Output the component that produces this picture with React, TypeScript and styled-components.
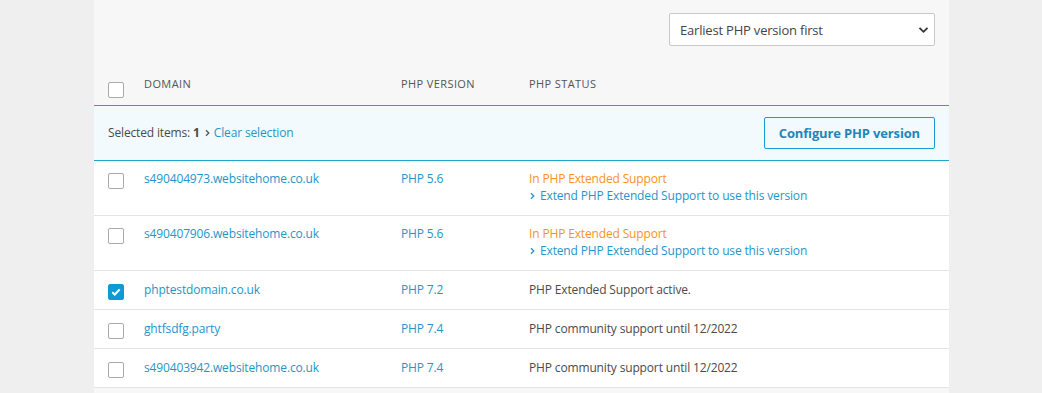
import React from 'react';
import styled, { createGlobalStyle } from 'styled-components';

const GlobalStyle = createGlobalStyle`
  body {
    margin: 0;
    background: #efefef;
    font-family: "Open Sans", "Liberation Sans", sans-serif;
    color: #4a4a4a;
  }
`;

type Row = {
  domain: string;
  version: string;
  status: string;
  extended?: boolean;
  checked?: boolean;
};

const rows: Row[] = [
  { domain: 's490404973.websitehome.co.uk', version: 'PHP 5.6', status: 'In PHP Extended Support', extended: true },
  { domain: 's490407906.websitehome.co.uk', version: 'PHP 5.6', status: 'In PHP Extended Support', extended: true },
  { domain: 'phptestdomain.co.uk', version: 'PHP 7.2', status: 'PHP Extended Support active.', checked: true },
  { domain: 'ghtfsdfg.party', version: 'PHP 7.4', status: 'PHP community support until 12/2022' },
  { domain: 's490403942.websitehome.co.uk', version: 'PHP 7.4', status: 'PHP community support until 12/2022' },
];

const Chevron = () => (
  <svg width="7" height="8" viewBox="0 0 7 8">
    <path d="M2 1.2 L4.8 4 L2 6.8" fill="none" stroke="currentColor" strokeWidth="1.3" />
  </svg>
);

const App = () => {
  return (
    <>
      <GlobalStyle />
      <Panel>
        <Toolbar>
          <Select>
            <span>Earliest PHP version first</span>
            <svg width="11" height="8" viewBox="0 0 11 8">
              <path d="M1.5 1.8 L5.5 5.8 L9.5 1.8" fill="none" stroke="#333" strokeWidth="1.8" />
            </svg>
          </Select>
        </Toolbar>
        <HeaderRow>
          <CheckCell>
            <Checkbox />
          </CheckCell>
          <HeadCell>Domain</HeadCell>
          <HeadCell>PHP Version</HeadCell>
          <HeadCell>PHP Status</HeadCell>
        </HeaderRow>
        <SelectionBar>
          <SelectionText>
            Selected items: <strong>1</strong>
            <Arrow>
              <Chevron />
            </Arrow>
            <Link>Clear selection</Link>
          </SelectionText>
          <OutlineButton>Configure PHP version</OutlineButton>
        </SelectionBar>
        {rows.map((r) => (
          <TableRow key={r.domain} $tall={!!r.extended}>
            <CheckCell>
              <Checkbox $checked={r.checked}>
                {r.checked && (
                  <svg width="10" height="8" viewBox="0 0 10 8">
                    <path d="M1.3 4.2 L3.8 6.5 L8.7 1.4" fill="none" stroke="#fff" strokeWidth="2" />
                  </svg>
                )}
              </Checkbox>
            </CheckCell>
            <Cell>
              <Link>{r.domain}</Link>
            </Cell>
            <Cell>
              <Link>{r.version}</Link>
            </Cell>
            <Cell>
              <Status $warn={r.extended}>{r.status}</Status>
              {r.extended && (
                <SubLink>
                  <Chevron />
                  Extend PHP Extended Support to use this version
                </SubLink>
              )}
            </Cell>
          </TableRow>
        ))}
      </Panel>
    </>
  );
};

export default App;

const Panel = styled.div`
  margin-left: 94px;
  width: 855px;
  min-height: 393px;
  background: #f7f7f7;
`;

const Toolbar = styled.div`
  display: flex;
  justify-content: flex-end;
  padding: 13px 14px 0 14px;
`;

const Select = styled.div`
  display: flex;
  align-items: center;
  justify-content: space-between;
  box-sizing: border-box;
  width: 266px;
  height: 33px;
  padding: 0 5px 0 10px;
  border: 1px solid #c9c9c9;
  border-radius: 2px;
  background: #fff;
  font-size: 13px;
  letter-spacing: -0.2px;
  color: #444;
`;

const grid = `
  display: grid;
  grid-template-columns: 36px 257px 128px 1fr;
  padding: 0 14px;
`;

const HeaderRow = styled.div`
  ${grid}
  height: 45px;
  margin-top: 14px;
  align-items: center;
  border-bottom: 1px solid #1ea6c9;
`;

const CheckCell = styled.div`
  display: flex;
  align-items: flex-start;
  padding-top: 2px;
  ${HeaderRow} & {
    padding-top: 14px;
  }
`;

const Checkbox = styled.span<{ $checked?: boolean }>`
  box-sizing: border-box;
  display: flex;
  align-items: center;
  justify-content: center;
  width: 16px;
  height: 16px;
  border: 1px solid ${(p) => (p.$checked ? '#0f9ad4' : '#a9a9a9')};
  border-radius: 2px;
  background: ${(p) => (p.$checked ? '#0f9ad4' : '#fff')};
`;

const HeadCell = styled.div`
  font-size: 11px;
  text-transform: uppercase;
  letter-spacing: 0.4px;
  color: #555;
  margin-top: 2px;
`;

const SelectionBar = styled.div`
  display: flex;
  align-items: center;
  justify-content: space-between;
  height: 54px;
  padding: 0 14px;
  background: #f2fafd;
  border-bottom: 1px solid #1ea6c9;
`;

const SelectionText = styled.div`
  display: flex;
  align-items: center;
  font-size: 12px;
  letter-spacing: -0.15px;
  color: #4a4a4a;
  margin-top: -1px;
  strong {
    margin-left: 3px;
    font-weight: 700;
  }
`;

const Arrow = styled.span`
  display: inline-flex;
  margin: 0 3px 0 4px;
  color: #555;
`;

const Link = styled.span`
  color: #2595c8;
  font-size: 12px;
`;

const OutlineButton = styled.button`
  box-sizing: border-box;
  height: 32px;
  padding: 0 14px;
  border: 1px solid #1a9ad0;
  border-radius: 2px;
  background: transparent;
  font-family: "Open Sans", "Liberation Sans", sans-serif;
  font-size: 13px;
  font-weight: 700;
  letter-spacing: -0.15px;
  color: #1f86b9;
`;

const TableRow = styled.div<{ $tall: boolean }>`
  ${grid}
  box-sizing: border-box;
  height: ${(p) => (p.$tall ? '55px' : '39px')};
  padding-top: ${(p) => (p.$tall ? '10px' : '11px')};
  background: #fff;
  border-bottom: 1px solid #e4e4e4;
`;

const Cell = styled.div`
  display: flex;
  flex-direction: column;
  font-size: 12px;
  line-height: 17px;
  letter-spacing: -0.15px;
  margin-top: -1px;
`;

const Status = styled.span<{ $warn?: boolean }>`
  color: ${(p) => (p.$warn ? '#f7931e' : '#4a4a4a')};
`;

const SubLink = styled.span`
  display: flex;
  align-items: center;
  gap: 4px;
  color: #2595c8;
`;
